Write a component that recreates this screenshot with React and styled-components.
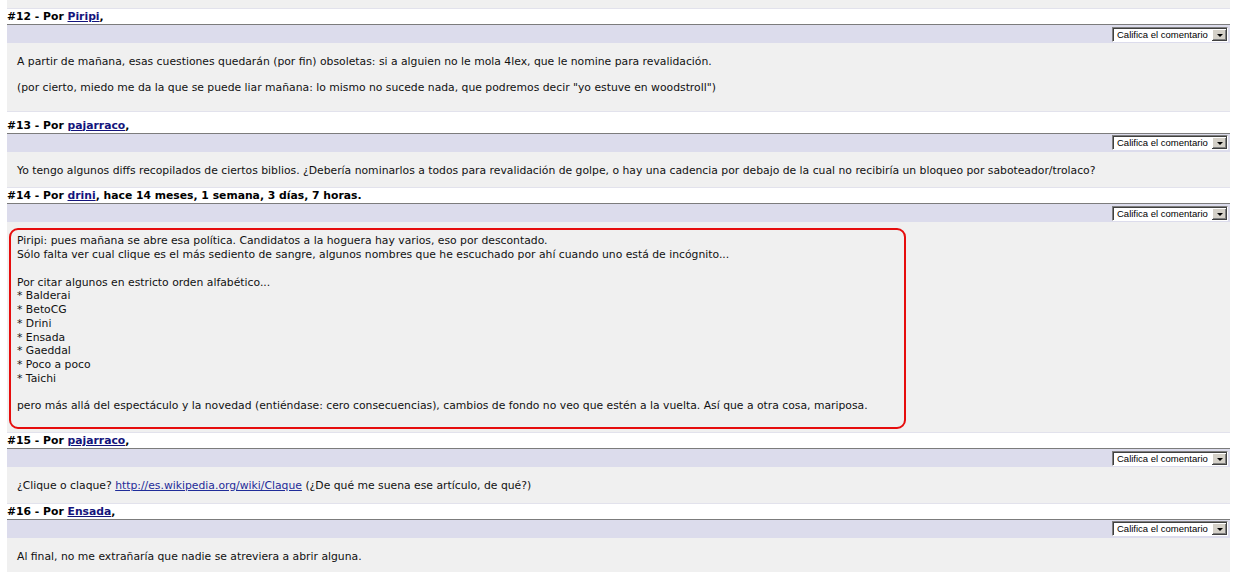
import React from "react";
import styled, { createGlobalStyle } from "styled-components";

const GlobalStyle = createGlobalStyle`
	html, body {
		margin: 0;
		background: #ffffff;
	}
	body {
		font-family: "DejaVu Sans", Verdana, sans-serif;
		color: #111;
		overflow: hidden;
	}
`;

const Page = styled.div`
	padding: 0 5px 0 7px;
`;

// cola del comentario anterior (#11), cortada arriba
const PrevTail = styled.div`
	height: 8px;
	background: #f0f0f0;
`;

const Header = styled.div`
	background: #ffffff;
	border-top: 1px solid #e2e2ec;
	border-bottom: 1px solid #7c7c7c;
	padding-top: ${(p) => p.$gap || 0}px;
	font-size: 10.8px;
	font-weight: 700;
	line-height: 15px;
	height: 15px;
	white-space: nowrap;
	color: #000;
`;

const AuthorLink = styled.a`
	color: #14147c;
	text-decoration: underline;
`;

const Bar = styled.div`
	height: 18px;
	background: #dcdcec;
	display: flex;
	align-items: center;
	justify-content: flex-end;
	padding-right: 2px;
`;

const Select = styled.div`
	display: flex;
	width: 116px;
	height: 15px;
	box-sizing: border-box;
	border: 1px solid;
	border-color: #808080 #ffffff #ffffff #808080;
	box-shadow: inset 1px 1px 0 #404040;
	background: #ffffff;
	padding: 1px 0 0 1px;
`;

const SelectText = styled.span`
	flex: 1;
	font-family: "Liberation Sans", Arial, sans-serif;
	font-size: 9.5px;
	line-height: 12px;
	padding-left: 3px;
	color: #000;
	white-space: nowrap;
	overflow: hidden;
`;

const ArrowButton = styled.span`
	width: 15px;
	height: 12px;
	background: #d4d0c8;
	box-shadow: inset -1px -1px 0 #404040, inset 1px 1px 0 #ffffff,
		inset -2px -2px 0 #808080;
	display: flex;
	align-items: center;
	justify-content: center;
	&::after {
		content: "";
		border-left: 3px solid transparent;
		border-right: 3px solid transparent;
		border-top: 3px solid #000;
		margin-top: 1px;
	}
`;

const Body = styled.div`
	position: relative;
	background: #f0f0f0;
	padding: 12px 10px ${(p) => p.$bottom ?? 10}px;
	font-size: 10.8px;
	line-height: 13.75px;
	color: #111;
	p {
		margin: 0 0 12px;
	}
	p:last-child {
		margin-bottom: 0;
	}
`;

const TextLink = styled.a`
	color: #1f2c99;
	text-decoration: underline;
`;

// marca roja a mano sobre el comentario #14
const Highlight = styled.div`
	position: absolute;
	left: 2px;
	top: 6px;
	width: 897px;
	height: 201px;
	box-sizing: border-box;
	border: 2px solid #e60d0d;
	border-radius: 9px;
	pointer-events: none;
`;

const Rating = () => (
	<Bar>
		<Select>
			<SelectText>Califica el comentario</SelectText>
			<ArrowButton />
		</Select>
	</Bar>
);

const Comment = ({ num, author, extra, gap, bottom, marked, children }) => (
	<>
		<Header $gap={gap}>
			#{num} - Por <AuthorLink href="#">{author}</AuthorLink>
			{extra || ","}
		</Header>
		<Rating />
		<Body $bottom={bottom}>
			{marked && <Highlight />}
			{children}
		</Body>
	</>
);

export default function App() {
	return (
		<Page>
			<GlobalStyle />
			<PrevTail />
			<Comment num={12} author="Piripi" bottom={16}>
				<p>
					A partir de mañana, esas cuestiones quedarán (por fin) obsoletas: si a
					alguien no le mola 4lex, que le nomine para revalidación.
				</p>
				<p>
					(por cierto, miedo me da la que se puede liar mañana: lo mismo no sucede
					nada, que podremos decir "yo estuve en woodstroll")
				</p>
			</Comment>
			<Comment num={13} author="pajarraco" gap={6}>
				<p>
					Yo tengo algunos diffs recopilados de ciertos biblios. ¿Debería
					nominarlos a todos para revalidación de golpe, o hay una cadencia por
					debajo de la cual no recibiría un bloqueo por saboteador/trolaco?
				</p>
			</Comment>
			<Comment
				num={14}
				author="drini"
				extra=", hace 14 meses, 1 semana, 3 días, 7 horas."
				bottom={19}
				marked
			>
				<p>
					Piripi: pues mañana se abre esa política. Candidatos a la hoguera hay
					varios, eso por descontado.
					<br />
					Sólo falta ver cual clique es el más sediento de sangre, algunos nombres
					que he escuchado por ahí cuando uno está de incógnito...
					<br />
					<br />
					Por citar algunos en estricto orden alfabético...
					<br />* Balderai
					<br />* BetoCG
					<br />* Drini
					<br />* Ensada
					<br />* Gaeddal
					<br />* Poco a poco
					<br />* Taichi
					<br />
					<br />
					pero más allá del espectáculo y la novedad (entiéndase: cero
					consecuencias), cambios de fondo no veo que estén a la vuelta. Así que a
					otra cosa, mariposa.
				</p>
			</Comment>
			<Comment num={15} author="pajarraco">
				<p>
					¿Clique o claque?{" "}
					<TextLink href="#">http://es.wikipedia.org/wiki/Claque</TextLink> (¿De qué
					me suena ese artículo, de qué?)
				</p>
			</Comment>
			<Comment num={16} author="Ensada">
				<p>Al final, no me extrañaría que nadie se atreviera a abrir alguna.</p>
			</Comment>
		</Page>
	);
}
